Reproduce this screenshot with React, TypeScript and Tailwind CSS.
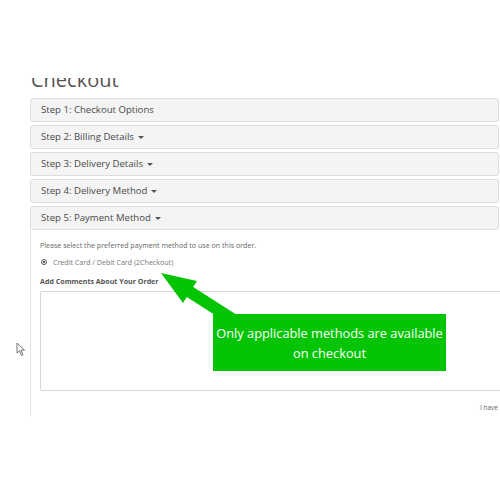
import React from 'react';

// Checkout page, step 5 open, with an annotation callout on top.

const steps = [
  { label: 'Step 1: Checkout Options', caret: false },
  { label: 'Step 2: Billing Details', caret: true },
  { label: 'Step 3: Delivery Details', caret: true },
  { label: 'Step 4: Delivery Method', caret: true },
  { label: 'Step 5: Payment Method', caret: true },
];

const Caret = () => (
  <span className="inline-block ml-[4px] align-middle w-0 h-0 border-l-[3px] border-r-[3px] border-t-[3px] border-l-transparent border-r-transparent border-t-[#555]" />
);

const App: React.FC = () => {
  return (
    <div className="relative w-[500px] h-[500px] overflow-hidden bg-white font-['Open_Sans',sans-serif] text-[#333]">
      <div className="h-[78px]" />
      {/* heading is cut off at the top in the screenshot */}
      <div className="flex flex-col h-[11px] overflow-hidden pl-[31px]">
        <div className="-mt-[8px] shrink-0 text-[20px] leading-[20px] text-[#555]">Checkout</div>
      </div>
      <div className="h-[9px]" />

      <div className="ml-[30px] w-[469px]">
        {steps.map((s, i) => (
          <div
            key={s.label}
            className={`h-[24px] flex items-center pl-[10px] bg-[#f4f4f4] border border-[#dedede] rounded-[3px] text-[9.6px] text-[#4a4a4a] ${
              i < steps.length - 1 ? 'mb-[3px]' : ''
            }`}
          >
            {s.label}
            {s.caret && <Caret />}
          </div>
        ))}

        {/* Step 5 body */}
        <div className="h-[187px] border-l border-[#e3e3e3] pl-[9px] pt-[10px]">
          <p className="text-[7.1px] leading-[10px] text-[#666]">
            Please select the preferred payment method to use on this order.
          </p>
          <label className="flex items-center mt-[7px] ml-[1px] text-[7.1px] leading-[10px] text-[#777]">
            <span className="w-[6px] h-[6px] rounded-full border border-[#555] flex items-center justify-center">
              <span className="w-[2px] h-[2px] rounded-full bg-[#222]" />
            </span>
            <span className="ml-[6px]">Credit Card / Debit Card (2Checkout)</span>
          </label>
          <p className="mt-[9px] text-[7.1px] leading-[10px] font-bold text-[#555]">Add Comments About Your Order</p>
          <div className="mt-[5px] w-[470px] h-[100px] border border-[#d6d6d6] rounded-[2px]" />
          <div className="mt-[12px] text-right pr-[1px] text-[6.5px] text-[#666]">I have</div>
        </div>
      </div>

      {/* mouse cursor */}
      <svg className="absolute left-[16px] top-[342px]" width="10" height="15" viewBox="0 0 10 15">
        <path d="M1 1 L1 11 L3.5 8.8 L5.5 13.5 L7 12.8 L5 8.2 L8.5 8.2 Z" fill="#fff" stroke="#666" strokeWidth="0.9" strokeLinejoin="round" />
      </svg>

      {/* callout arrow */}
      <svg className="absolute left-0 top-0 pointer-events-none" width="500" height="500" viewBox="0 0 500 500">
        <polygon
          points="161,273 197,281 193.2,287 237,315 230.6,325 186.8,297 183,303"
          fill="#04c404"
        />
      </svg>

      {/* callout box */}
      <div className="absolute left-[213px] top-[314px] w-[233px] h-[57px] bg-[#04c404] flex flex-col items-center justify-center text-white text-[12.8px] leading-[20px]">
        <span>Only applicable methods are available</span>
        <span>on checkout</span>
      </div>
    </div>
  );
};

export default App;
